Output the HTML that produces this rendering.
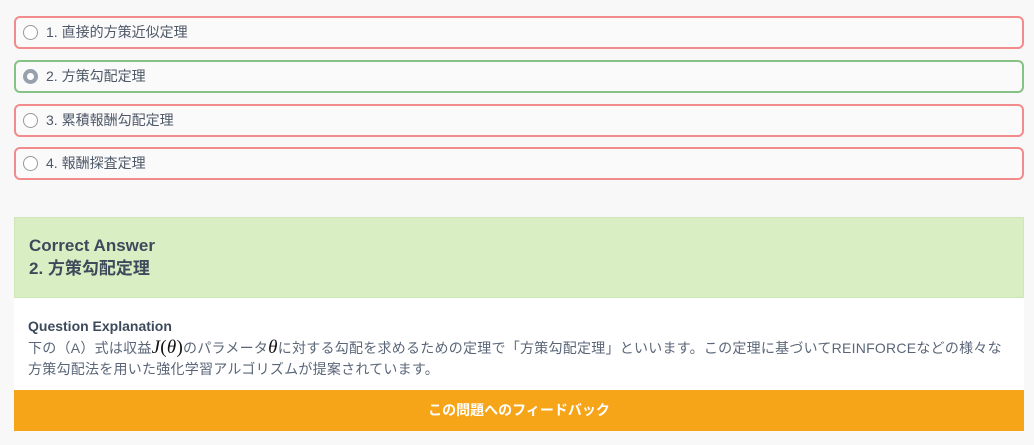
<!DOCTYPE html>
<html><head><meta charset="utf-8"><style>
*{margin:0;padding:0;box-sizing:border-box}
body{width:1034px;height:445px;background:#f8f8f8;font-family:"Liberation Sans","Noto Sans CJK JP",sans-serif;color:#4a5568;position:relative;overflow:hidden}
.opt{position:absolute;left:14px;width:1010px;height:33px;border:2px solid #f28b8b;border-radius:6px;background:#fafafa;font-size:14px;color:#4d5868;line-height:29px;padding-left:30px}
.opt.g{border-color:#86c186}
.r{position:absolute;left:7px;top:7px;width:15px;height:15px;border:1.5px solid #999;border-radius:50%;background:#fff}
.g .r{border:4px solid #97a0ac;background:#fff}
.green{position:absolute;left:14px;top:217px;width:1010px;height:81px;background:#d9efc3;border:1px solid #cfe6b8;padding:16px 14px;color:#3d4a5c}
.green .a{font-size:17px;font-weight:bold;line-height:23px}
.white{position:absolute;left:14px;top:298px;width:1010px;height:92px;background:#fff;padding:18px 14px;font-size:14px;line-height:21px;color:#5a6678}
.white .t{letter-spacing:0.25px}
.white b{color:#3d4a5c;font-size:14px}
.m{font-family:"Liberation Serif",serif;font-style:italic;font-size:19px;color:#111}
.orange{position:absolute;left:14px;top:390px;width:1010px;height:41px;background:#f6a418;color:#fff;font-weight:bold;font-size:14px;text-align:center;line-height:41px}
</style></head><body>
<div class="opt" style="top:16px"><span class="r"></span>1. 直接的方策近似定理</div>
<div class="opt g" style="top:60px"><span class="r"></span>2. 方策勾配定理</div>
<div class="opt" style="top:104px"><span class="r"></span>3. 累積報酬勾配定理</div>
<div class="opt" style="top:147px"><span class="r"></span>4. 報酬探査定理</div>
<div class="green"><div class="a">Correct Answer</div><div class="a">2. 方策勾配定理</div></div>
<div class="white"><b>Question Explanation</b><div class="t">下の（A）式は収益<span class="m">J</span><span class="m" style="font-style:normal">(</span><span class="m">θ</span><span class="m" style="font-style:normal">)</span>のパラメータ<span class="m">θ</span>に対する勾配を求めるための定理で「方策勾配定理」といいます。この定理に基づいてREINFORCEなどの様々な<br>方策勾配法を用いた強化学習アルゴリズムが提案されています。</div></div>
<div class="orange">この問題へのフィードバック</div>
</body></html>
